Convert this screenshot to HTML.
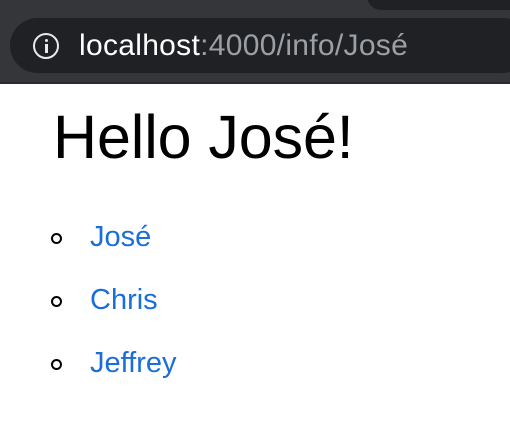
<!DOCTYPE html><html><head><style>
body{margin:0;width:510px;height:428px;overflow:hidden;background:#fff;font-family:"Liberation Sans",sans-serif}
.bar{position:absolute;left:0;top:0;width:510px;height:82px;background:#35363a;border-bottom:2px solid #2a2b2e}
.tab{position:absolute;left:367px;top:-20px;width:160px;height:30px;background:#202124;border-radius:0 0 0 14px}
.url{position:absolute;left:10px;top:18px;width:520px;height:55px;background:#202124;border-radius:28px}
.ic{position:absolute;left:33px;top:33px;width:22px;height:22px;border:2.5px solid #e8eaed;border-radius:50%}
.ic:before{content:"";position:absolute;left:9.5px;top:4px;width:3px;height:3px;background:#e8eaed;border-radius:50%}
.ic:after{content:"";position:absolute;left:9.5px;top:9px;width:3px;height:9px;background:#e8eaed}
.t{position:absolute;left:79px;top:30px;font-size:30px;line-height:32px;color:#fff;white-space:nowrap;letter-spacing:0.3px}
.t span{color:#9aa0a6}
h1{position:absolute;left:53px;top:102px;margin:0;font-weight:normal;font-size:61px;line-height:70px;color:#000;letter-spacing:-0.1px}
.li{position:absolute;left:90px;font-size:29px;line-height:34px;color:#1a6ed8}
.b{position:absolute;left:51px;width:7px;height:7px;border:2px solid #000;border-radius:50%}
</style></head><body>
<div class="bar"><div class="tab"></div><div class="url"></div><div class="ic"></div><div class="t">localhost<span>:4000/info/José</span></div></div>
<h1>Hello José!</h1>
<div class="b" style="top:233px"></div><div class="li" style="top:220px">José</div>
<div class="b" style="top:296px"></div><div class="li" style="top:283px">Chris</div>
<div class="b" style="top:359px"></div><div class="li" style="top:346px">Jeffrey</div>
</body></html>
